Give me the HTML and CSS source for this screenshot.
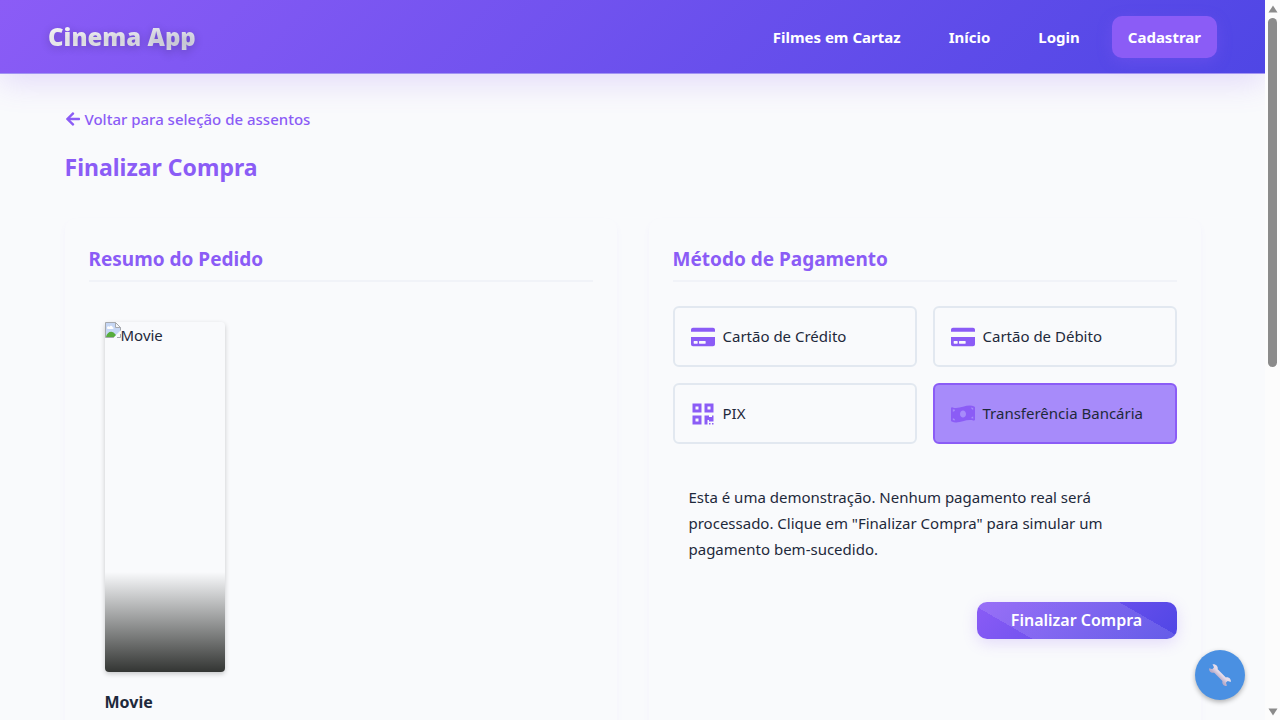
FILE: index.html
```html
<!DOCTYPE html>
<html lang="pt-BR">
<head>
<meta charset="utf-8">
<meta name="viewport" content="width=device-width, initial-scale=1">
<title>Cinema App</title>
<link rel="stylesheet" href="styles.css">
</head>
<body>
<div class="app">
  <header class="header">
    <a class="logo" href="#">Cinema App</a>
    <nav class="nav">
      <a class="nav-link" href="#">Filmes em Cartaz</a>
      <a class="nav-link" href="#">Início</a>
      <a class="nav-link" href="#">Login</a>
      <a class="nav-link nav-link-primary" href="#">Cadastrar</a>
    </nav>
  </header>
  <main class="main">
    <a class="back" href="#">
      <svg class="back-icon" viewBox="0 0 448 512" aria-hidden="true"><path d="M257.5 445.1l-22.2 22.2c-9.4 9.4-24.6 9.4-33.9 0L7 273c-9.4-9.4-9.4-24.6 0-33.9L201.4 44.7c9.4-9.4 24.6-9.4 33.9 0l22.2 22.2c9.5 9.5 9.3 25-.4 34.3L136.6 216H424c13.3 0 24 10.7 24 24v32c0 13.3-10.7 24-24 24H136.6l120.5 114.8c9.8 9.3 10 24.8.4 34.3z"/></svg>
      Voltar para seleção de assentos
    </a>
    <h1 class="title">Finalizar Compra</h1>
    <div class="columns">
      <section class="card">
        <h2 class="card-title">Resumo do Pedido</h2>
        <div class="movie">
          <div class="poster">
            <svg class="broken" viewBox="0 0 16 16" aria-hidden="true">
              <path d="M.5 .5h10l5 5v3l-7 7h-8z" fill="#c6d7f5"/>
              <path d="M2 6c0-2 2-2 2.500-1 1-2 3-1 3 .2 1.500 0 1.500 1.800 0 1.800H3C2 7 2 6 2 6z" fill="#fff"/>
              <path d="M1 15c1-5 6-7 9-3l1 1-2.500 2.500H1z" fill="#57ad3c"/>
              <path d="M.5 15.500V.5h10l5 5v3M.5 15.500h8M15.500 12v3.500H12" fill="none" stroke="#a6a9ae"/>
              <path d="M10.500 .5v5h5z" fill="#f4f6f9" stroke="#a6a9ae"/>
            </svg>
            <span>Movie</span>
          </div>
          <h3 class="movie-name">Movie</h3>
        </div>
      </section>
      <section class="card">
        <h2 class="card-title">Método de Pagamento</h2>
        <form class="payment">
          <div class="options">
            <label class="option"><input class="option-input" type="radio" name="method">
              <svg class="option-icon" viewBox="0 0 576 512" aria-hidden="true"><path d="M0 432c0 26.500 21.500 48 48 48h480c26.500 0 48-21.500 48-48V256H0v176zm192-68c0-6.600 5.400-12 12-12h136c6.600 0 12 5.400 12 12v40c0 6.600-5.400 12-12 12H204c-6.600 0-12-5.400-12-12v-40zm-128 0c0-6.600 5.400-12 12-12h72c6.600 0 12 5.400 12 12v40c0 6.600-5.400 12-12 12H76c-6.600 0-12-5.400-12-12v-40zM576 80v48H0V80c0-26.500 21.500-48 48-48h480c26.500 0 48 21.500 48 48z"/></svg>
              <span>Cartão de Crédito</span></label>
            <label class="option"><input class="option-input" type="radio" name="method">
              <svg class="option-icon" viewBox="0 0 576 512" aria-hidden="true"><path d="M0 432c0 26.500 21.500 48 48 48h480c26.500 0 48-21.500 48-48V256H0v176zm192-68c0-6.600 5.400-12 12-12h136c6.600 0 12 5.400 12 12v40c0 6.600-5.400 12-12 12H204c-6.600 0-12-5.400-12-12v-40zm-128 0c0-6.600 5.400-12 12-12h72c6.600 0 12 5.400 12 12v40c0 6.600-5.400 12-12 12H76c-6.600 0-12-5.400-12-12v-40zM576 80v48H0V80c0-26.500 21.500-48 48-48h480c26.500 0 48 21.500 48 48z"/></svg>
              <span>Cartão de Débito</span></label>
            <label class="option"><input class="option-input" type="radio" name="method">
              <svg class="option-icon" viewBox="0 0 448 512" aria-hidden="true"><path d="M0 224h192V32H0v192zM64 96h64v64H64V96zm192-64v192h192V32H256zm128 128h-64V96h64v64zM0 480h192V288H0v192zm64-128h64v64H64v-64zm352-64h32v128h-96v-32h-32v96h-64V288h96v32h64v-32zm0 160h32v32h-32v-32zm-64 0h32v32h-32v-32z"/></svg>
              <span>PIX</span></label>
            <label class="option"><input class="option-input" type="radio" name="method" checked>
              <svg class="option-icon" viewBox="0 0 640 512" aria-hidden="true"><path d="M621.160 54.460C582.370 38.190 543.550 32 504.750 32c-123.170-.01-246.330 62.340-369.500 62.340-30.890 0-61.760-3.920-92.650-13.720-3.470-1.100-6.950-1.620-10.350-1.620C15.040 79 0 92.320 0 110.810v317.260c0 12.630 7.230 24.600 18.840 29.460C57.630 473.810 96.450 480 135.250 480c123.170 0 246.340-62.350 369.510-62.350 30.890 0 61.760 3.920 92.650 13.720 3.470 1.100 6.950 1.620 10.350 1.620 17.210 0 32.250-13.320 32.250-31.810V83.930c-.01-12.640-7.240-24.600-18.850-29.470zM48 132.220c20.120 5.040 41.120 7.570 62.720 8.930C104.840 170.540 79 192.690 48 192.690v-60.470zm0 285v-47.780c34.370 0 62.180 27.270 63.710 61.400-22.530-1.810-43.590-6.310-63.710-13.620zM320 352c-44.190 0-80-42.990-80-96 0-53.020 35.820-96 80-96s80 42.980 80 96c0 53.030-35.830 96-80 96zm272 27.780c-17.520-4.390-35.710-6.850-54.320-8.440 5.870-26.080 27.500-45.880 54.320-49.280v57.720zm0-236.110c-30.890-3.910-54.860-29.700-55.810-61.550 19.540 2.170 38.090 6.230 55.810 12.660v48.890z"/></svg>
              <span>Transferência Bancária</span></label>
          </div>
          <p class="note">Esta é uma demonstração. Nenhum pagamento real será processado. Clique em "Finalizar Compra" para simular um pagamento bem-sucedido.</p>
          <button class="submit" type="button">Finalizar Compra</button>
        </form>
      </section>
    </div>
  </main>
  <button class="fab" type="button" aria-label="Ferramentas">
    <svg class="fab-icon" viewBox="0 0 24 24" aria-hidden="true">
      <defs><linearGradient id="steel" x1="0" y1="1" x2="1" y2="0"><stop offset="0.4" stop-color="#b9acc9"/><stop offset="0.55" stop-color="#e6dcea"/></linearGradient></defs>
      <path d="M4.500 1.300L6 4.300 4.300 6.200 1.200 5.200C.7 8 3 10.400 6.200 9.700L14.400 17.900C13.700 21 16.200 23.400 19 22.800L17.900 19.700 19.700 17.900 22.800 19C23.400 16.200 21 13.700 17.900 14.400L9.700 6.200C10.400 3 7.500.7 4.500 1.300z" fill="url(#steel)"/>
    </svg>
  </button>
</div>
<div class="scrollbar" aria-hidden="true">
  <svg class="scroll-arrow" viewBox="0 0 10 8"><path d="M5 0.500L9.500 7.500H.5z"/></svg>
  <div class="scroll-track"><div class="scroll-thumb"></div></div>
  <svg class="scroll-arrow" viewBox="0 0 10 8"><path d="M5 7.500L9.500 .5H.5z"/></svg>
</div>
</body>
</html>
```

FILE: styles.css
```css
:root {
  --primary: #8b5cf6;
  --primary-light: #a78bfa;
  --secondary: #4f46e5;
  --text: #1e293b;
  --bg: #f9fafc;
  --border: #e2e8f0;
}

* {
  box-sizing: border-box;
  margin: 0;
}

body {
  display: flex;
  height: 100vh;
  overflow: hidden;
  background: var(--bg);
  color: var(--text);
  font-family: "Segoe UI", "Noto Sans", sans-serif;
  font-size: 15px;
  line-height: 26px;
}

a {
  text-decoration: none;
}

.app {
  flex: 1;
  min-width: 0;
  overflow: hidden;
}

.header {
  display: flex;
  align-items: center;
  justify-content: space-between;
  padding: 16px 48px 15px;
  background: linear-gradient(135deg, var(--primary), var(--secondary));
  border-bottom: 1px solid #a294f3;
  box-shadow: 0 8px 32px rgba(139, 92, 246, 0.2);
}

.logo {
  background: linear-gradient(135deg, #ffffff, #e0e0f0);
  background-clip: text;
  -webkit-background-clip: text;
  color: transparent;
  font-size: 24px;
  font-weight: 900;
  text-shadow: 0 2px 10px rgba(0, 0, 0, 0.2);
}

.nav {
  display: flex;
  gap: 16px;
}

.nav-link {
  padding: 8px 16px;
  border-radius: 10px;
  color: #fff;
  font-weight: 700;
}

.nav-link-primary {
  background: var(--primary);
  box-shadow: 0 4px 15px rgba(139, 92, 246, 0.3);
}

.main {
  max-width: 1200px;
  margin: 0 auto;
  padding: 32px;
}

.back {
  display: inline-flex;
  align-items: center;
  gap: 4px;
  color: var(--primary);
  font-weight: 500;
}

.back-icon {
  width: 16px;
  height: 16px;
  fill: currentColor;
}

.title {
  margin: 14px 0 32px;
  color: var(--primary);
  font-size: 23px;
  font-weight: 700;
  line-height: 38px;
}

.columns {
  display: grid;
  grid-template-columns: 1fr 1fr;
  gap: 32px;
}

.card {
  min-height: 640px;
  padding: 24px;
  border-radius: 12px;
  background: var(--bg);
  box-shadow: 0 4px 6px rgba(139, 92, 246, 0.05);
}

.card-title {
  margin-bottom: 24px;
  padding-bottom: 4px;
  border-bottom: 2px solid #f1f3f8;
  color: var(--primary);
  font-size: 19px;
  font-weight: 700;
  line-height: 34px;
}

.movie {
  padding: 16px;
}

.poster {
  display: flex;
  align-items: flex-start;
  width: 120px;
  height: 350px;
  border-radius: 4px;
  background: linear-gradient(to top, #333533, rgba(51, 53, 51, 0) 100px);
  box-shadow: 0 2px 5px rgba(0, 0, 0, 0.2);
}

.broken {
  flex: none;
  width: 16px;
  height: 16px;
}

.movie-name {
  margin-top: 16px;
  font-size: 16px;
  font-weight: 700;
  line-height: 28px;
}

.payment {
  display: flex;
  flex-direction: column;
}

.options {
  display: grid;
  grid-template-columns: 1fr 1fr;
  gap: 16px;
}

.option {
  display: flex;
  align-items: center;
  gap: 8px;
  padding: 16px;
  border: 2px solid var(--border);
  border-radius: 6px;
  line-height: 25px;
}

.option:has(:checked) {
  border-color: var(--primary);
  background: var(--primary-light);
}

.option-input {
  position: absolute;
  appearance: none;
  opacity: 0;
}

.option-icon {
  flex: none;
  width: 24px;
  height: 24px;
  fill: var(--primary);
}

.note {
  margin: 24px 0;
  padding: 16px;
}

.submit {
  align-self: flex-end;
  min-width: 200px;
  padding: 6px 32px;
  border: 0;
  border-radius: 10px;
  background:
    linear-gradient(30deg, transparent 21%, rgba(255, 255, 255, 0.12) 21%, rgba(255, 255, 255, 0.12) 78%, transparent 78%),
    linear-gradient(135deg, var(--primary), var(--secondary));
  box-shadow: 0 4px 15px rgba(139, 92, 246, 0.2);
  color: #fff;
  font: inherit;
  font-size: 16px;
  font-weight: 600;
  line-height: 25px;
}

.fab {
  position: fixed;
  right: 35px;
  bottom: 20px;
  display: grid;
  place-items: center;
  width: 50px;
  height: 50px;
  padding: 0;
  border: 0;
  border-radius: 50%;
  background: #4a90e2;
  box-shadow: 0 2px 5px rgba(0, 0, 0, 0.3);
}

.fab-icon {
  width: 24px;
  height: 24px;
}

.scrollbar {
  display: flex;
  flex-direction: column;
  align-items: center;
  gap: 5px;
  width: 15px;
  padding: 5px 0 4px;
  background: #fcfcfc;
}

.scroll-arrow {
  width: 10px;
  height: 8px;
  fill: #8b8b8b;
}

.scroll-track {
  flex: 1;
}

.scroll-thumb {
  width: 9px;
  height: 51%;
  border-radius: 5px;
  background: #8b8b8b;
}
```
